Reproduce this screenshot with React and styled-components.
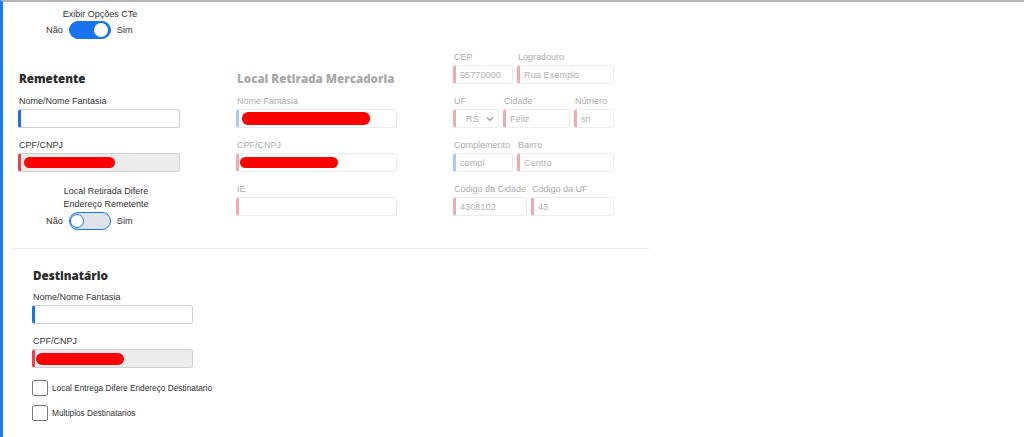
import styled, { createGlobalStyle } from "styled-components";

const GlobalStyle = createGlobalStyle`
  html, body {
    margin: 0;
    padding: 0;
    background: #fff;
  }
  body {
    font-family: "Liberation Sans", Arial, sans-serif;
    color: #333;
  }
`;

const Page = styled.div`
  min-height: 437px;
  box-sizing: border-box;
  border-left: 3px solid #1a7af0;
  border-top: 2px solid #b4b4b4;
  padding-top: 7px;
`;

const SwitchGroup = styled.div`
  margin: ${(p) => p.$top || 0}px 0 0 ${(p) => p.$left}px;
  width: ${(p) => p.$width}px;
  display: flex;
  flex-direction: column;
`;

const SwitchCaption = styled.div`
  font-size: 9px;
  line-height: ${(p) => p.$lh || 11}px;
  text-align: center;
  white-space: nowrap;
  color: #333;
`;

const SwitchRow = styled.div`
  display: flex;
  align-items: center;
  gap: 6px;
  font-size: 9.2px;
  margin-top: 1px;
`;

const Track = styled.div`
  width: 42px;
  height: 18px;
  box-sizing: border-box;
  border-radius: 9px;
  border: 1.5px solid #1a73e8;
  background: ${(p) => (p.$on ? "#1873ee" : "#dfe4ea")};
  display: flex;
  align-items: center;
  justify-content: ${(p) => (p.$on ? "flex-end" : "flex-start")};
  padding: 0 1px;
`;

const Knob = styled.div`
  width: 14px;
  height: 14px;
  box-sizing: border-box;
  border-radius: 50%;
  background: #fff;
  border: ${(p) => (p.$on ? "none" : "1.5px solid #1a73e8")};
  margin: ${(p) => (p.$on ? "0 1px 0 0" : "0 0 0 -1px")};
`;

const Toggle = ({ on }) => (
  <SwitchRow>
    <span>Não</span>
    <Track $on={on}>
      <Knob $on={on} />
    </Track>
    <span>Sim</span>
  </SwitchRow>
);

const Sections = styled.div`
  display: flex;
  align-items: flex-start;
  margin-top: 12px;
`;

const Column = styled.div`
  width: ${(p) => p.$width}px;
  margin-left: ${(p) => p.$left}px;
  padding-top: ${(p) => p.$top || 0}px;
  display: flex;
  flex-direction: column;
  gap: 12px;
`;

const Heading = styled.h3`
  margin: 0 0 -3.5px 1px;
  font-family: "Open Sans", "Liberation Sans", sans-serif;
  font-weight: 800;
  font-size: 11.6px;
  line-height: 16px;
  color: ${(p) => (p.$faded ? "#a9a9a9" : "#2b2b2b")};
`;

const FieldRow = styled.div`
  display: flex;
  gap: 4px;
`;

const Field = styled.div`
  width: ${(p) => (p.$width ? `${p.$width}px` : "100%")};
  display: flex;
  flex-direction: column;
`;

const Label = styled.label`
  font-size: 9px;
  line-height: 11px;
  margin: 0 0 2px 1px;
  white-space: nowrap;
  color: ${(p) => (p.$faded ? "#adadad" : "#333")};
`;

const accents = {
  blue: "#1a73e8",
  red: "#e0454f",
  paleBlue: "#a6c8f4",
  paleRed: "#f2a9ae",
};

const InputBox = styled.div`
  height: 19px;
  box-sizing: border-box;
  border: 1px solid ${(p) => (p.$faded ? "#ececec" : "#cfcfcf")};
  border-left: 3px solid ${(p) => accents[p.$accent]};
  border-radius: 3px;
  background: ${(p) => (p.$disabled ? "#ececec" : "#fff")};
  display: flex;
  align-items: center;
  padding: 0 4px 0 4px;
  font-size: 9.2px;
  color: #b3b3b3;
  overflow: hidden;
`;

const Redaction = styled.div`
  flex: none;
  width: ${(p) => p.$width}px;
  height: ${(p) => p.$height || 11}px;
  margin-left: ${(p) => p.$offset || 0}px;
  border-radius: 6px;
  background: #ff0000;
`;

const SelectValue = styled.span`
  flex: 1;
  padding-left: 6px;
`;

const Chevron = () => (
  <svg width="8" height="6" viewBox="0 0 8 6">
    <path d="M1 1.5l3 3 3-3" fill="none" stroke="#9a9a9a" strokeWidth="1.2" />
  </svg>
);

const Divider = styled.hr`
  margin: 18px 0 0 9px;
  width: 637px;
  border: none;
  border-top: 1px solid #e9e9e9;
`;

const Check = styled.label`
  display: flex;
  align-items: center;
  gap: 4px;
  font-size: 8.3px;
  white-space: nowrap;
  color: #333;
`;

const Box = styled.span`
  flex: none;
  width: 16px;
  height: 16px;
  box-sizing: border-box;
  border: 1px solid #7a7a7a;
  border-radius: 2px;
  background: #fff;
`;

const CheckList = styled.div`
  display: flex;
  flex-direction: column;
  gap: 9px;
  margin-top: 0;
`;

export default function App() {
  return (
    <>
      <GlobalStyle />
      <Page>
        <SwitchGroup $left={43} $width={108}>
          <SwitchCaption>Exibir Opções CTe</SwitchCaption>
          <Toggle on />
        </SwitchGroup>

        <Sections>
          <Column $left={15} $width={162} $top={20}>
            <Heading>Remetente</Heading>
            <Field>
              <Label>Nome/Nome Fantasia</Label>
              <InputBox $accent="blue" />
            </Field>
            <Field>
              <Label>CPF/CNPJ</Label>
              <InputBox $accent="red" $disabled>
                <Redaction $width={91} $offset={-1} />
              </InputBox>
            </Field>
            <SwitchGroup $left={28} $width={120} $top={1}>
              <SwitchCaption $lh={13}>
                Local Retirada Difere
                <br />
                Endereço Remetente
              </SwitchCaption>
              <Toggle />
            </SwitchGroup>
          </Column>

          <Column $left={56} $width={161} $top={20}>
            <Heading $faded>Local Retirada Mercadoria</Heading>
            <Field>
              <Label $faded>Nome Fantasia</Label>
              <InputBox $accent="paleBlue" $faded>
                <Redaction $width={128} $height={13} $offset={-1} />
              </InputBox>
            </Field>
            <Field>
              <Label $faded>CPF/CNPJ</Label>
              <InputBox $accent="paleRed" $faded>
                <Redaction $width={98} $offset={-3} />
              </InputBox>
            </Field>
            <Field>
              <Label $faded>IE</Label>
              <InputBox $accent="paleRed" $faded />
            </Field>
          </Column>

          <Column $left={56} $width={161} $top={1}>
            <FieldRow>
              <Field $width={60}>
                <Label $faded>CEP</Label>
                <InputBox $accent="paleRed" $faded>95770000</InputBox>
              </Field>
              <Field $width={97}>
                <Label $faded>Logradouro</Label>
                <InputBox $accent="paleRed" $faded>Rua Exemplo</InputBox>
              </Field>
            </FieldRow>
            <FieldRow>
              <Field $width={46}>
                <Label $faded>UF</Label>
                <InputBox $accent="paleRed" $faded>
                  <SelectValue>RS</SelectValue>
                  <Chevron />
                </InputBox>
              </Field>
              <Field $width={67}>
                <Label $faded>Cidade</Label>
                <InputBox $accent="paleRed" $faded>Feliz</InputBox>
              </Field>
              <Field $width={40}>
                <Label $faded>Número</Label>
                <InputBox $accent="paleRed" $faded>sn</InputBox>
              </Field>
            </FieldRow>
            <FieldRow>
              <Field $width={60}>
                <Label $faded>Complemento</Label>
                <InputBox $accent="paleBlue" $faded>compl</InputBox>
              </Field>
              <Field $width={97}>
                <Label $faded>Bairro</Label>
                <InputBox $accent="paleRed" $faded>Centro</InputBox>
              </Field>
            </FieldRow>
            <FieldRow>
              <Field $width={74}>
                <Label $faded>Código da Cidade</Label>
                <InputBox $accent="paleRed" $faded>4308102</InputBox>
              </Field>
              <Field $width={83}>
                <Label $faded>Código da UF</Label>
                <InputBox $accent="paleRed" $faded>43</InputBox>
              </Field>
            </FieldRow>
          </Column>
        </Sections>

        <Divider />

        <Column $left={29} $width={161} $top={19}>
          <Heading>Destinatário</Heading>
          <Field>
            <Label>Nome/Nome Fantasia</Label>
            <InputBox $accent="blue" />
          </Field>
          <Field>
            <Label>CPF/CNPJ</Label>
            <InputBox $accent="red" $disabled>
              <Redaction $width={88} $height={12} $offset={-3} />
            </InputBox>
          </Field>
          <CheckList>
            <Check>
              <Box />
              Local Entrega Difere Endereço Destinatario
            </Check>
            <Check>
              <Box />
              Multiplos Destinatarios
            </Check>
          </CheckList>
        </Column>
      </Page>
    </>
  );
}
